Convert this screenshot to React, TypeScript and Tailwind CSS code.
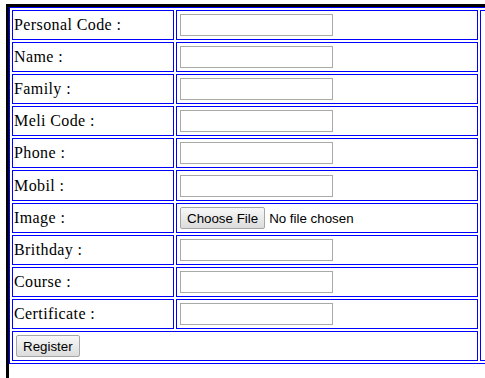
import React from "react";

const labels = [
  "Personal Code :",
  "Name :",
  "Family :",
  "Meli Code :",
  "Phone :",
  "Mobil :",
  "Image :",
  "Brithday :",
  "Course :",
  "Certificate :",
];

function Btn({ children }: { children: React.ReactNode }) {
  return (
    <span className="inline-flex items-center justify-center h-[22px] px-[6px] pt-[2px] border border-[#a6a6a6] rounded-[2px] bg-linear-to-b from-[#f8f8f8] to-[#dcdcdc] text-[13.33px] leading-none text-black font-['Liberation_Sans',Arial,sans-serif]">
      {children}
    </span>
  );
}

export default function App() {
  return (
    <div className="w-[485px] h-[378px] overflow-hidden bg-white">
      <div className="ml-[6px] mt-[4px] w-[600px] h-[420px] border-[3px] border-black">
        <table className="table-fixed w-[580px] border-separate border-spacing-[2px] border border-[#0000ff]">
          <colgroup>
            <col className="w-[162px]" />
            <col className="w-[302px]" />
            <col />
          </colgroup>
          <tbody>
            {labels.map((label, i) => (
              <tr key={label}>
                <td className="h-[30.1px] p-[1px] border border-[#0000ff] align-middle text-[16px] tracking-[0.4px] text-black font-['Liberation_Serif','Times_New_Roman',serif] whitespace-nowrap">
                  {label}
                </td>
                <td className="h-[30.1px] p-[1px] border border-[#0000ff] align-middle">
                  {label === "Image :" ? (
                    <div className="flex items-center ml-[2px] h-[22px]">
                      <Btn>Choose File</Btn>
                      <span className="ml-[4px] pt-[2px] text-[13.33px] text-black font-['Liberation_Sans',Arial,sans-serif]">
                        No file chosen
                      </span>
                    </div>
                  ) : (
                    <div className="ml-[2px] w-[153px] h-[22px] border border-[#a9a9a9] bg-white" />
                  )}
                </td>
                {i === 0 && (
                  <td rowSpan={11} className="p-[1px] border border-[#0000ff]"></td>
                )}
              </tr>
            ))}
            <tr>
              <td colSpan={2} className="h-[30.1px] p-[1px] border border-[#0000ff] align-middle">
                <div className="ml-[2px] flex">
                  <Btn>Register</Btn>
                </div>
              </td>
            </tr>
          </tbody>
        </table>
      </div>
    </div>
  );
}
